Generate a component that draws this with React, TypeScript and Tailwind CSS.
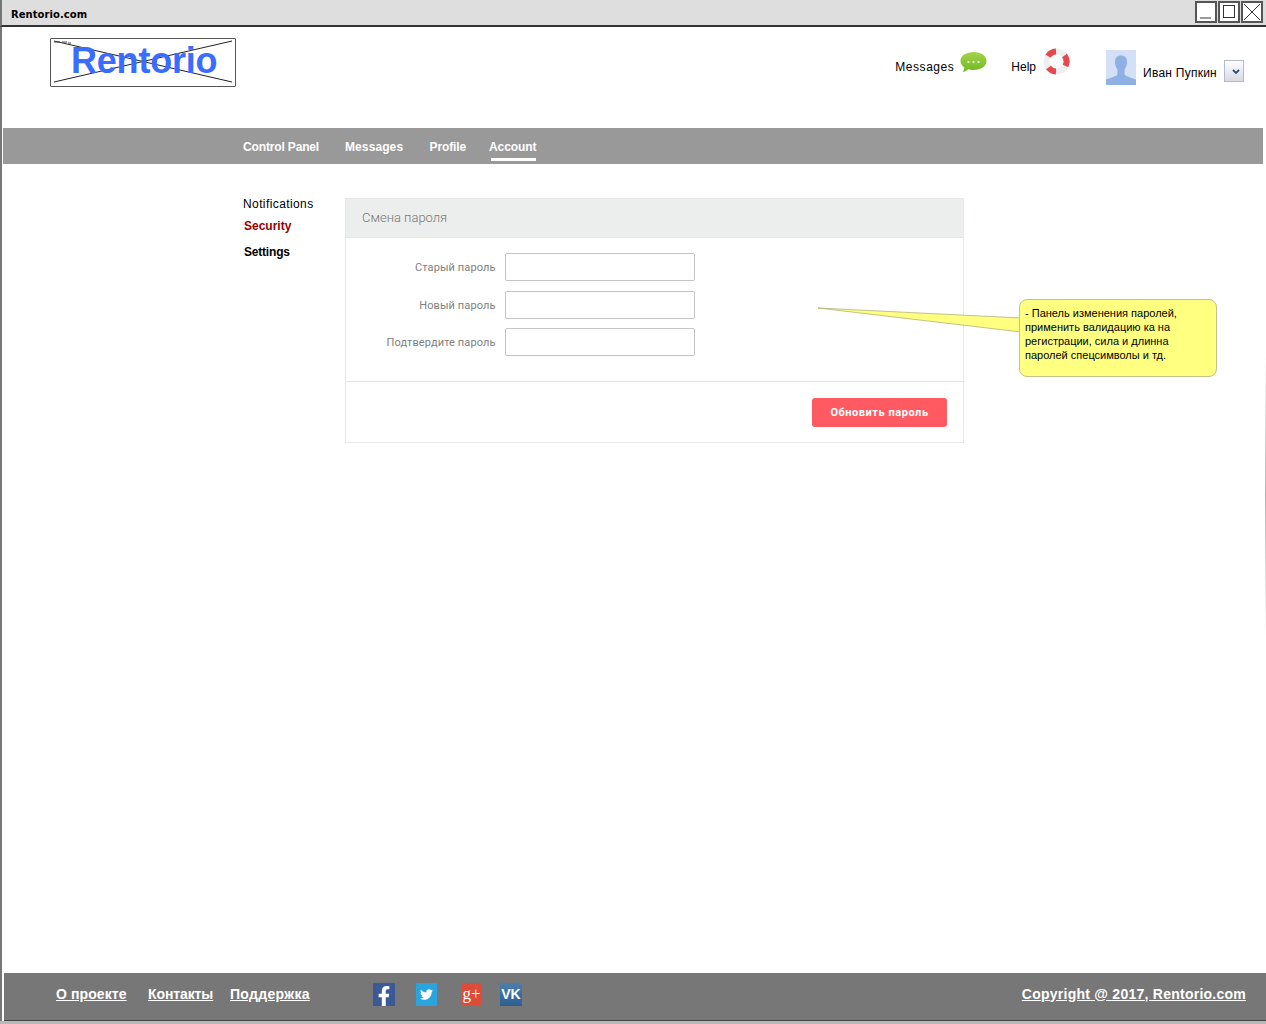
import * as React from "react";
import { FaFacebookF, FaTwitter } from "react-icons/fa";

const navItems = [
  { label: "Control Panel", className: "w-[102px] tracking-[-0.15px]" },
  { label: "Messages", className: "w-[84.5px] tracking-[0.1px]" },
  { label: "Profile", className: "w-[60px] tracking-[-0.1px]" },
];

const PasswordRow = ({ label }: { label: string }) => (
  <div className="flex items-center h-[28px]">
    <label className="w-[149.5px] text-right text-[11px] tracking-[0.1px] text-[#808080] font-['Roboto',sans-serif] mt-[3px]">
      {label}
    </label>
    <input
      type="password"
      className="ml-[9.5px] w-[190px] h-[28px] bg-white border border-[#c4c4c4] rounded-[2px] outline-none"
    />
  </div>
);

const WindowButton = ({ children }: { children: React.ReactNode }) => (
  <div className="w-[22px] h-[22px] border-2 border-[#555] bg-white flex items-center justify-center">
    <svg width="18" height="18" viewBox="0 0 18 18" fill="none" stroke="#333" strokeWidth="1">
      {children}
    </svg>
  </div>
);

const LogoPlaceholder = () => (
  <div className="relative w-[186px] h-[49px] border border-[#555] rounded-[1px] ml-[48px] mt-[11px]">
    <svg className="absolute inset-0" width="184" height="47" viewBox="0 0 184 47" fill="none" stroke="#222" strokeWidth="1">
      <path d="M3 2 L181 43" />
      <path d="M181 2 L3 43" />
      <path d="M3 3 h6 M11 3 h5 M17 4 h3" stroke="#444" />
    </svg>
    <span className="absolute left-[20px] top-[0px] text-[36px] leading-[44px] font-bold text-[#3a6cff] font-['Liberation_Sans',sans-serif] tracking-[-0.2px]">
      Rentorio
    </span>
  </div>
);

const ChatBubble = () => (
  <svg width="27" height="22" viewBox="0 0 27 22">
    <defs>
      <linearGradient id="chatGreen" x1="0" y1="0" x2="0" y2="1">
        <stop offset="0" stopColor="#a5d44a" />
        <stop offset="1" stopColor="#6fb822" />
      </linearGradient>
    </defs>
    <path
      d="M13.5 1 C21 1 26.5 4.5 26.5 10 C26.5 15.5 21 19 13.5 19 C11.5 19 9.5 18.8 8 18.3 C6.5 20 4.5 21 2.5 21 C3.8 19.6 4.3 18 4.2 16.4 C1.9 14.7 0.5 12.5 0.5 10 C0.5 4.5 6 1 13.5 1 Z"
      fill="url(#chatGreen)"
    />
    <circle cx="8.5" cy="11" r="1.1" fill="#fff" />
    <circle cx="13.5" cy="11" r="1.1" fill="#fff" />
    <circle cx="18.5" cy="11" r="1.1" fill="#fff" />
  </svg>
);

const LifeBuoy = () => (
  <svg width="27" height="27" viewBox="0 0 27 27" fill="none">
    <circle cx="13.5" cy="13.5" r="10" stroke="#efefef" strokeWidth="6" />
    <path d="M5 8.2 A10 10 0 0 1 13 3.5" stroke="#e8474c" strokeWidth="6" />
    <path d="M21.5 7.5 A10 10 0 0 1 22.5 18" stroke="#e8474c" strokeWidth="6" />
    <path d="M13 23.5 A10 10 0 0 1 5.5 19.5" stroke="#e8474c" strokeWidth="6" />
  </svg>
);

const Avatar = () => (
  <svg width="30" height="35" viewBox="0 0 30 35" className="block">
    <rect width="30" height="35" fill="#d3e0f5" />
    <path
      d="M15 5.5 C19 5.5 21.2 8 21 12 C20.9 15 20 17.5 18.6 19.5 L18.6 25 C22 27 26 28 30 29.5 L30 35 L0 35 L0 29.5 C4 28 8 27 11.4 25 L11.4 19.5 C10 17.5 9.1 15 9 12 C8.8 8 11 5.5 15 5.5 Z"
      fill="#8eb0e4"
    />
  </svg>
);

const SocialIcon = ({ className, children }: { className: string; children: React.ReactNode }) => (
  <div className={`h-[23px] flex justify-center text-white ${className}`}>{children}</div>
);

export default function App() {
  return (
    <div className="relative w-[1266px] h-[1024px] overflow-hidden bg-white font-['Liberation_Sans',sans-serif]">
      <div className="h-[27px] bg-[#dedede] border-b-2 border-[#333] border-l-2 border-l-[#777] flex items-center justify-between pl-[9px] pr-[3px]">
        <span className="mt-[3px] text-[10px] font-bold text-black font-['DejaVu_Sans',sans-serif] tracking-[0.05px]">
          Rentorio.com
        </span>
        <div className="flex gap-[1px] mt-[-1px]">
          <WindowButton>
            <path d="M3 15 H14" />
          </WindowButton>
          <WindowButton>
            <rect x="3.5" y="2.5" width="11" height="12" />
          </WindowButton>
          <WindowButton>
            <path d="M1 1 L17 17 M17 1 L1 17" />
          </WindowButton>
        </div>
      </div>

      <div className="flex flex-col h-[994px] border-l-2 border-[#777]">
        <header className="h-[101px] flex justify-between shrink-0">
          <LogoPlaceholder />
          <div className="flex items-start text-[12px] text-black">
            <span className="mt-[31px] tracking-[0.55px] font-medium">Messages</span>
            <div className="ml-[6px] mt-[24px]">
              <ChatBubble />
            </div>
            <span className="ml-[24px] mt-[31px]">Help</span>
            <div className="ml-[7px] mt-[21px]">
              <LifeBuoy />
            </div>
            <div className="ml-[36px] mt-[23px]">
              <Avatar />
            </div>
            <span className="ml-[7px] mt-[37px] tracking-[0.25px]">Иван Пупкин</span>
            <div className="ml-[7px] mt-[33px] mr-[22px] w-[20px] h-[22px] border border-[#b4b9d0] bg-gradient-to-b from-white to-[#d6d9e4] flex items-center justify-center pl-[3px]">
              <svg width="8" height="5" viewBox="0 0 8 5">
                <path d="M1 1 L4 4 L7 1" fill="none" stroke="#2f4a80" strokeWidth="1.8" />
              </svg>
            </div>
          </div>
        </header>

        <nav className="h-[36px] ml-[1px] mr-[3px] bg-[#999] flex pl-[240px] shrink-0 text-[12px] font-bold text-white">
          {navItems.map((item) => (
            <span key={item.label} className={`${item.className} pt-[10px]`}>
              {item.label}
            </span>
          ))}
          <span className="pt-[10px] ml-[-0.5px] tracking-[-0.1px] relative h-[36px]">
            Account
            <span className="absolute left-[2px] right-0 bottom-[3px] h-[3px] bg-white" />
          </span>
        </nav>

        <main className="flex-1 flex pl-[241px] pt-[34px]">
          <aside className="w-[102px] shrink-0 text-[12px] font-medium">
            <div className="mt-[-3px] tracking-[0.4px] text-black">Notifications</div>
            <div className="ml-[1px] mt-[4px] font-bold text-[#990000]">Security</div>
            <div className="ml-[1px] mt-[8px] font-bold tracking-[-0.2px] text-black">Settings</div>
          </aside>

          <section className="w-[619px] h-[245px] border border-[#e8e8e8]">
            <div className="h-[39px] bg-[#eceeed] pl-[16px] flex items-center border-b border-[#e6e6e6] text-[13px] text-[#777] font-['Roboto',sans-serif] font-light">
              Смена пароля
            </div>
            <div className="h-[144px] pt-[15px] flex flex-col gap-[9.5px] border-b border-[#e3e3e3]">
              <PasswordRow label="Старый пароль" />
              <PasswordRow label="Новый пароль" />
              <PasswordRow label="Подтвердите пароль" />
            </div>
            <div className="flex justify-end pr-[16px] pt-[16px]">
              <button
                type="button"
                className="w-[135px] h-[29px] pt-[1px] rounded-[3px] bg-[#ff5a61] text-white text-[11px] font-bold tracking-[0.55px] font-['Roboto',sans-serif]"
              >
                Обновить пароль
              </button>
            </div>
          </section>
        </main>

        <footer className="h-[48px] ml-[2px] bg-[#777] border-b border-[#444] flex items-center justify-between shrink-0 pl-[52px] pr-[20px] pb-[5px] text-[14px] font-bold text-white">
          <div className="flex items-center">
            <a className="w-[92px] underline tracking-[0.1px]">О проекте</a>
            <a className="w-[82px] underline tracking-[-0.1px]">Контакты</a>
            <a className="w-[143px] underline tracking-[0.3px]">Поддержка</a>
            <SocialIcon className="w-[22px] bg-[#3b5998] text-[20px] items-end">
              <FaFacebookF />
            </SocialIcon>
            <SocialIcon className="ml-[21px] w-[21px] h-[21px] bg-[#2ba3dc] text-[13px] items-center">
              <FaTwitter />
            </SocialIcon>
            <SocialIcon className="ml-[24px] w-[21px] bg-[#dd4b39] items-center text-[17px] font-normal leading-none font-['Liberation_Serif',serif]">
              <span className="mt-[-2px]">g+</span>
            </SocialIcon>
            <SocialIcon className="ml-[18px] w-[22px] bg-gradient-to-b from-[#4a7fb0] to-[#2d5f91] items-center text-[14px] leading-none">
              VK
            </SocialIcon>
          </div>
          <a className="underline tracking-[0.25px]">Copyright @ 2017, Rentorio.com</a>
        </footer>
      </div>
      <div className="h-[3px] bg-[#b8b8b8]" />

      {/* callout laid over the panel */}
      <svg className="absolute left-[815px] top-[300px]" width="210" height="40" viewBox="0 0 210 40">
        <path d="M3 8 L206 18 L206 32 Z" fill="#ffff80" stroke="#b3b37a" strokeWidth="0.8" />
      </svg>
      <div className="absolute left-[1019px] top-[299px] w-[198px] h-[78px] rounded-[8px] bg-[#ffff80] border border-[#c4c48a] pl-[5px] pt-[6px] text-[11px] leading-[14px] text-black">
        - Панель изменения паролей,
        <br />
        применить валидацию ка на
        <br />
        регистрации, сила и длинна
        <br />
        паролей спецсимволы и тд.
      </div>

      <div className="absolute right-0 top-[355px] w-[1px] h-[282px] bg-gradient-to-b from-white via-[#b5b5b5] to-white" />
    </div>
  );
}
